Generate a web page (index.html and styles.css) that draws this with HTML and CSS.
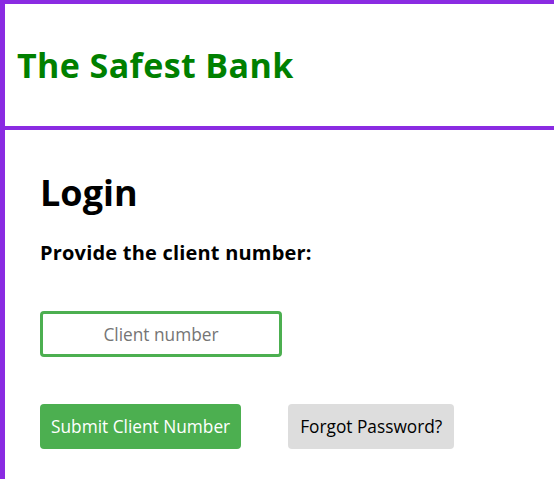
FILE: index.html
```html
<!DOCTYPE html>
<html>
<head>
<meta charset="utf-8">
<link rel="stylesheet" href="styles.css">
</head>
<body>
<header class="site-header">
  <h1 class="brand">The Safest Bank</h1>
</header>
<main class="content">
  <h2 class="title">Login</h2>
  <p class="prompt">Provide the client number:</p>
  <input class="client-input" type="text" placeholder="Client number">
  <div class="actions">
    <button class="btn btn-primary">Submit Client Number</button>
    <button class="btn btn-secondary">Forgot Password?</button>
  </div>
</main>
</body>
</html>
```

FILE: styles.css
```css
html, body {
  margin: 0;
  padding: 0;
  background: #fff;
  font-family: "Open Sans", "Noto Sans", sans-serif;
}
.site-header {
  border-top: 4px solid #8a2be2;
  border-left: 5px solid #8a2be2;
  border-bottom: 4px solid #8a2be2;
  height: 122px;
  display: flex;
  align-items: center;
  padding-left: 12px;
}
.brand {
  margin: 0;
  color: #008000;
  font-size: 34px;
  letter-spacing: 0.4px;
  font-weight: 700;
}
.content {
  box-sizing: border-box;
  border-left: 5px solid #8a2be2;
  padding: 41px 0 0 35px;
  min-height: calc(100vh - 130px);
}
.title {
  margin: 0;
  font-size: 36px;
  line-height: 44px;
  font-weight: 700;
  color: #000;
}
.prompt {
  margin: 24px 0 0;
  font-size: 20px;
  letter-spacing: 0.2px;
  font-weight: 700;
}
.client-input {
  display: block;
  margin-top: 45px;
  width: 242px;
  height: 46px;
  box-sizing: border-box;
  border: 3px solid #4caf50;
  border-radius: 4px;
  text-align: center;
  font-family: inherit;
  font-size: 17.3px;
  color: #333;
  outline: none;
}
.client-input::placeholder {
  color: #757575;
}
.actions {
  display: flex;
  gap: 47px;
  margin-top: 47px;
}
.btn {
  height: 45px;
  border: none;
  border-radius: 4px;
  padding: 0 11px;
  font-family: inherit;
  font-size: 17.3px;
}
.btn-primary {
  background: #4caf50;
  color: #fff;
}
.btn-secondary {
  background: #ddd;
  color: #000;
  padding: 0 12px;
}
```
